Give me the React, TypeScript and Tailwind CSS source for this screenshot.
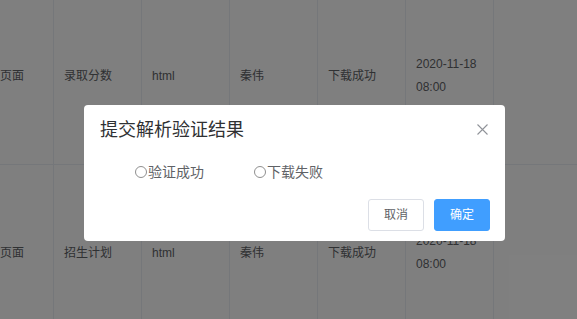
import React from "react";

const rows = [
  ["页面", "录取分数", "html", "秦伟", "下载成功", "2020-11-18 08:00", ""],
  ["页面", "招生计划", "html", "秦伟", "下载成功", "2020-11-18 08:00", ""],
];

function Radio({ label }: { label: string }) {
  return (
    <label className="flex items-center text-[14px] leading-[20px] text-[#606266]">
      <span className="box-border h-[12px] w-[12px] rounded-full border border-[#8f8f8f] bg-white" />
      <span className="ml-[1px]">{label}</span>
    </label>
  );
}

export default function App() {
  return (
    <div
      className="relative h-[319px] w-[577px] overflow-hidden bg-white"
      style={{ fontFamily: '"Liberation Sans", "Noto Sans CJK SC", sans-serif' }}
    >
      <div className="-mt-[12px] flex flex-col">
        {rows.map((r, i) => (
          <div key={i} className="flex border-b border-[#ebeef5]">
            {r.map((c, j) => (
              <div
                key={j}
                className={
                  j === 0
                    ? "box-border flex h-[176px] w-[54px] shrink-0 items-center border-r border-[#ebeef5] text-[12px] leading-[23px] text-[#606266]"
                    : "box-border flex h-[176px] w-[88px] shrink-0 items-center border-r border-[#ebeef5] px-[10px] text-[12px] leading-[23px] text-[#606266]"
                }
              >
                <div className="whitespace-normal break-words">{c}</div>
              </div>
            ))}
          </div>
        ))}
      </div>

      <div className="absolute inset-0 bg-black/50" />

      <div className="absolute left-[84px] top-[105px] box-border flex h-[136px] w-[421px] flex-col rounded-[4px] bg-white">
        <div className="flex items-center justify-between pl-[16px] pr-[17px] pt-[13px]">
          <span className="text-[18px] leading-[24px] text-[#303133]">提交解析验证结果</span>
          <svg width="11" height="11" viewBox="0 0 11 11" className="mt-[-1px]">
            <path d="M0.5 0.5 L10.5 10.5 M10.5 0.5 L0.5 10.5" stroke="#909399" strokeWidth="1.1" fill="none" />
          </svg>
        </div>
        <div className="mt-[20px] flex items-center gap-[50px] pl-[51px]">
          <Radio label="验证成功" />
          <Radio label="下载失败" />
        </div>
        <div className="mt-[17px] flex justify-end gap-[10px] pr-[15px]">
          <button className="box-border h-[32px] w-[56px] rounded-[3px] border border-[#dcdfe6] bg-white text-[12px] text-[#606266]">
            取消
          </button>
          <button className="box-border h-[32px] w-[56px] rounded-[3px] border border-[#409eff] bg-[#409eff] text-[12px] text-white">
            确定
          </button>
        </div>
      </div>
    </div>
  );
}
